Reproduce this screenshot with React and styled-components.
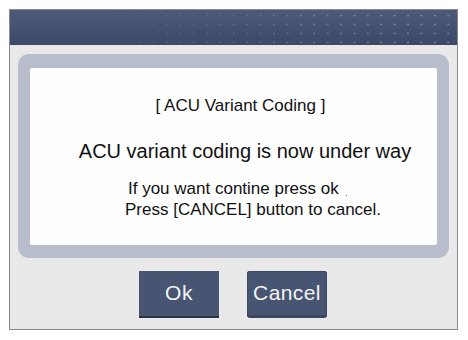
import React from "react";
import styled, { createGlobalStyle } from "styled-components";

const Global = createGlobalStyle`
  html, body { margin: 0; padding: 0; background: #ffffff; }
  body { font-family: "Liberation Sans", Arial, sans-serif; }
`;

const Page = styled.div`
  padding: 9px 0 0 9px;
`;

const Frame = styled.div`
  width: 447px;
  height: 319px;
  border: 1px solid #8a8a8a;
  background: #e9e9e9;
  display: flex;
  flex-direction: column;
`;

const Header = styled.div`
  position: relative;
  height: 35px;
  flex: none;
  background: linear-gradient(#4d5b7b, #3c4866);
  &::after {
    content: "";
    position: absolute;
    inset: 0;
    background-image: radial-gradient(circle, rgba(180, 190, 215, 0.45) 0.7px, transparent 1.3px);
    background-size: 13.4px 9px;
    background-position: 3px 1px;
    -webkit-mask-image: linear-gradient(90deg, transparent 15%, rgba(0,0,0,0.5) 50%, #000 85%);
    mask-image: linear-gradient(90deg, transparent 15%, rgba(0,0,0,0.5) 50%, #000 85%);
  }
`;

const Body = styled.div`
  flex: 1;
  display: flex;
  flex-direction: column;
  padding: 9px 8px 0 8px;
`;

const Panel = styled.div`
  height: 204px;
  box-sizing: border-box;
  background: #b8bdcc;
  border-radius: 11px;
  padding: 14px 12px 13px 12px;
  display: flex;
`;

const Message = styled.div`
  flex: 1;
  background: #fefefe;
  border-radius: 2px;
  color: #111;
  display: flex;
  flex-direction: column;
`;

const Title = styled.div`
  font-size: 17px;
  line-height: 20px;
  text-align: center;
  padding: 28px 0 0 14px;
`;

const Lead = styled.div`
  font-size: 20px;
  line-height: 24px;
  text-align: center;
  padding: 23px 0 0 23px;
`;

const Notes = styled.div`
  font-size: 17px;
  line-height: 21px;
  padding: 15px 0 0 95px;
`;

const NoteLine = styled.div`
  padding-left: ${(p) => p.$indent || 0}px;
`;

const Speck = styled.span`
  display: inline-block;
  width: 1px;
  height: 1px;
  background: #777;
  margin-left: 7px;
  vertical-align: -2px;
`;

const Buttons = styled.div`
  display: flex;
  justify-content: center;
  gap: 28px;
  padding-top: 13px;
  padding-right: 1px;
`;

const Button = styled.button`
  width: 80px;
  height: 47px;
  box-sizing: border-box;
  padding: 0 0 2px 0;
  background: #475572;
  color: #f4f4f4;
  font-family: "Liberation Sans", Arial, sans-serif;
  font-size: 21px;
  letter-spacing: ${(p) => (p.$wide ? "0.4px" : "0.5px")};
  border: none;
  border-radius: ${(p) => (p.$round ? "3px" : "0")};
  border-bottom: 2px solid ${(p) => (p.$round ? "#3a4560" : "#2b3346")};
  box-shadow: ${(p) => (p.$round ? "inset 0 0 0 1px #3d4864" : "none")};
  cursor: pointer;
`;

export default function App() {
  return (
    <>
      <Global />
      <Page>
        <Frame>
          <Header />
          <Body>
            <Panel>
              <Message>
                <Title>[ ACU Variant Coding ]</Title>
                <Lead>ACU variant coding is now under way</Lead>
                <Notes>
                  <NoteLine $indent={3}>
                    If you want contine press ok
                    <Speck />
                  </NoteLine>
                  <NoteLine>Press [CANCEL] button to cancel.</NoteLine>
                </Notes>
              </Message>
            </Panel>
            <Buttons>
              <Button>Ok</Button>
              <Button $round $wide>Cancel</Button>
            </Buttons>
          </Body>
        </Frame>
      </Page>
    </>
  );
}
